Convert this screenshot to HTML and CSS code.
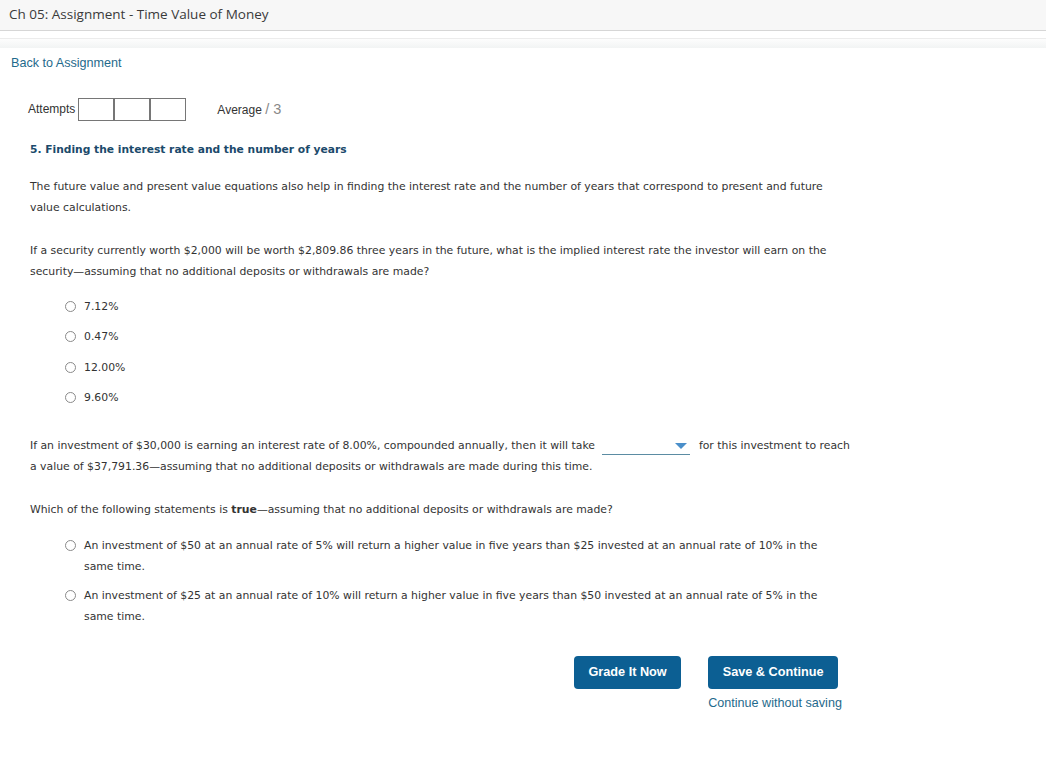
FILE: index.html
```html
<!DOCTYPE html>
<html>
<head>
<meta charset="utf-8">
<title>Ch 05: Assignment - Time Value of Money</title>
<link rel="stylesheet" href="styles.css">
</head>
<body>
<header class="topbar">Ch 05: Assignment - Time Value of Money</header>
<div class="band"></div>
<nav class="backnav"><a class="back" href="#">Back to Assignment</a></nav>
<main class="content">
  <div class="attempts">
    <span class="att-label">Attempts</span>
    <span class="boxes"><span class="box"></span><span class="box"></span><span class="box"></span></span>
    <span class="avg">Average <span class="avg-num">/ 3</span></span>
  </div>
  <h2 class="qtitle">5. Finding the interest rate and the number of years</h2>
  <p class="para">The future value and present value equations also help in finding the interest rate and the number of years that correspond to present and future value calculations.</p>
  <p class="para">If a security currently worth $2,000 will be worth $2,809.86 three years in the future, what is the implied interest rate the investor will earn on the security—assuming that no additional deposits or withdrawals are made?</p>
  <ul class="opts">
    <li class="opt"><span class="radio"></span><span>7.12%</span></li>
    <li class="opt"><span class="radio"></span><span>0.47%</span></li>
    <li class="opt"><span class="radio"></span><span>12.00%</span></li>
    <li class="opt"><span class="radio"></span><span>9.60%</span></li>
  </ul>
  <p class="para p3">If an investment of $30,000 is earning an interest rate of 8.00%, compounded annually, then it will take <span class="dd"><span class="caret"></span></span> for this investment to reach a value of $37,791.36—assuming that no additional deposits or withdrawals are made during this time.</p>
  <p class="para p4">Which of the following statements is <b>true</b>—assuming that no additional deposits or withdrawals are made?</p>
  <ul class="opts long">
    <li class="opt"><span class="radio"></span><span class="otext">An investment of $50 at an annual rate of 5% will return a higher value in five years than $25 invested at an annual rate of 10% in the same time.</span></li>
    <li class="opt"><span class="radio"></span><span class="otext">An investment of $25 at an annual rate of 10% will return a higher value in five years than $50 invested at an annual rate of 5% in the same time.</span></li>
  </ul>
  <div class="actions">
    <button class="btn">Grade It Now</button>
    <div class="savecol">
      <button class="btn">Save &amp; Continue</button>
      <a class="cont" href="#">Continue without saving</a>
    </div>
  </div>
</main>
</body>
</html>
```
FILE: styles.css
```css
html, body { margin: 0; padding: 0; background: #fff; }
body { font-family: "DejaVu Sans", Verdana, sans-serif; color: #333; }
.topbar {
  height: 31px;
  box-sizing: border-box;
  background: #f7f7f7;
  border-bottom: 1px solid #d6d6d6;
  font-family: "Open Sans", sans-serif;
  font-size: 13.5px;
  line-height: 28px;
  padding-left: 9px;
  color: #3a3a3a;
}
.band {
  margin-top: 7px;
  height: 9px;
  border-top: 1px solid #ececec;
  background: linear-gradient(#fdfdfd, #f2f4f4);
}
.backnav { padding: 4px 0 0 11px; height: 32px; box-sizing: content-box; }
.back {
  font-family: "Liberation Sans", Arial, sans-serif;
  font-size: 12.6px;
  color: #1f6a8c;
  text-decoration: none;
  line-height: 16px;
}
.content { padding: 0 0 0 30px; width: 824px; }
.attempts {
  display: flex;
  align-items: center;
  margin-top: 13px;
  margin-left: -2px;
  font-family: "Liberation Sans", Arial, sans-serif;
  font-size: 12px;
  color: #333;
  height: 24px;
}
.att-label { margin-right: 3px; }
.boxes { display: flex; }
.box { width: 34px; height: 21px; border: 1px solid #767676; }
.avg { margin-left: 31px; }
.avg-num { color: #888; font-size: 14.5px; }
.qtitle {
  font-size: 10.7px;
  font-weight: bold;
  color: #1b4a6b;
  margin: 21px 0 0;
  line-height: 16px;
}
.para {
  font-size: 10.85px;
  line-height: 21px;
  margin: 18px 0 0;
}
.para + .para { margin-top: 22px; }
.opts { list-style: none; margin: 14px 0 0; padding: 0 0 0 35px; }
.opt { display: flex; align-items: flex-start; font-size: 10.85px; line-height: 21px; margin-bottom: 9.3px; }
.radio {
  flex: none;
  width: 9px; height: 9px;
  border: 1px solid #8a8a8a;
  border-radius: 50%;
  margin: 5px 8px 0 0;
  background: #fff;
}
.p3 { margin-top: 27px; }
.p4 { margin-top: 23px; }
.dd {
  display: inline-block;
  width: 88px;
  height: 14px;
  border-bottom: 1px solid #5b8ca3;
  position: relative;
  vertical-align: -6px;
  margin: 0 5px 0 4px;
}
.caret {
  position: absolute;
  right: 3px;
  top: 3px;
  width: 0; height: 0;
  border-left: 6px solid transparent;
  border-right: 6px solid transparent;
  border-top: 6px solid #4a8fca;
}
.long { margin-top: 15px; }
.long .opt { margin-bottom: 8px; }
.otext { max-width: 745px; }
.actions {
  display: flex;
  justify-content: flex-end;
  gap: 27px;
  margin-top: 29px;
  padding-right: 16px;
}
.btn {
  background: #0c5f93;
  color: #fff;
  border: none;
  border-radius: 4px;
  font-family: "Liberation Sans", Arial, sans-serif;
  font-weight: bold;
  font-size: 12.7px;
  height: 33px;
  padding: 0 14.5px;
  cursor: pointer;
}
.savecol { display: flex; flex-direction: column; align-items: flex-start; }
.cont {
  font-family: "Liberation Sans", Arial, sans-serif;
  font-size: 12.6px;
  color: #1f6a8c;
  text-decoration: none;
  margin-top: 7px;
  margin-right: -8px;
  white-space: nowrap;
}
```
